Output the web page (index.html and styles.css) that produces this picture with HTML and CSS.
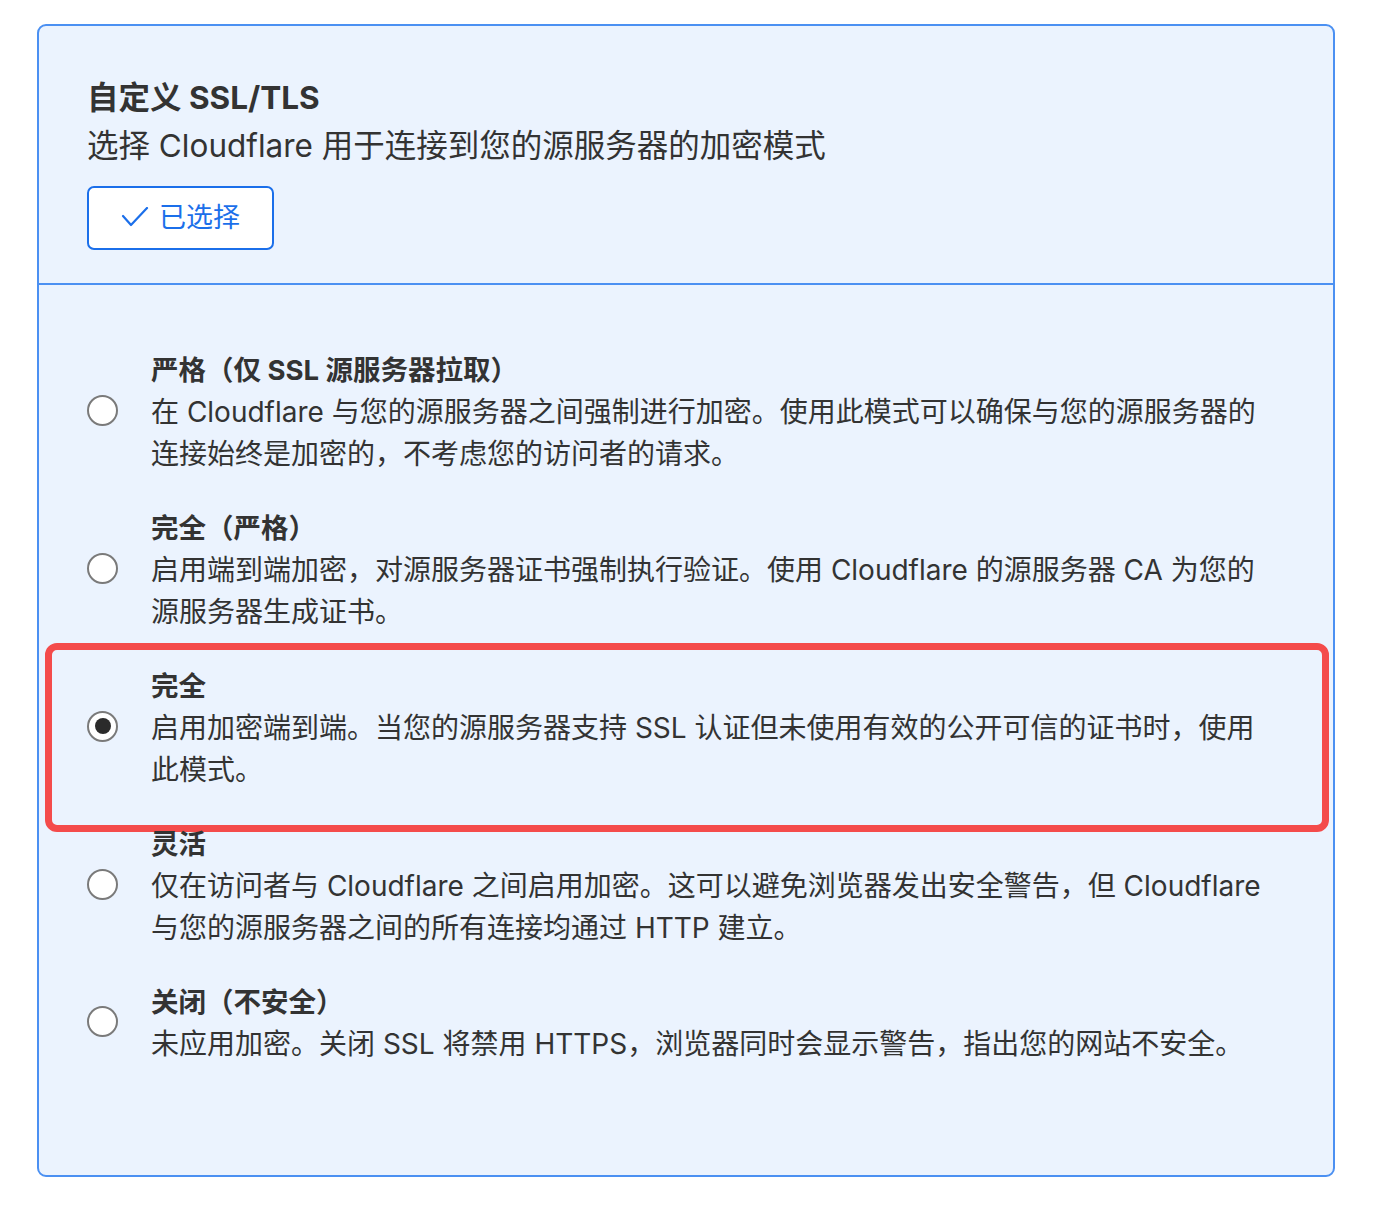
FILE: index.html
```html
<!DOCTYPE html>
<html lang="zh-CN">
<head>
<meta charset="utf-8">
<title>自定义 SSL/TLS</title>
<link rel="stylesheet" href="styles.css">
</head>
<body>
<div class="page">
  <section class="card">
    <header class="card-head">
      <h2 class="title">自定义 SSL/TLS</h2>
      <p class="subtitle">选择 Cloudflare 用于连接到您的源服务器的加密模式</p>
      <button class="btn-selected" type="button">
        <svg class="check" width="28" height="22" viewBox="0 0 28 22" aria-hidden="true"><polyline points="2,9 10,18 26,1" fill="none" stroke="currentColor" stroke-width="2.2" stroke-linecap="round" stroke-linejoin="round"/></svg>
        <span>已选择</span>
      </button>
    </header>
    <div class="card-body">
      <div class="option">
        <span class="radio"></span>
        <div class="opt-text">
          <div class="opt-title">严格（仅 SSL 源服务器拉取）</div>
          <div class="opt-desc">在 Cloudflare 与您的源服务器之间强制进行加密。使用此模式可以确保与您的源服务器的连接始终是加密的，不考虑您的访问者的请求。</div>
        </div>
      </div>
      <div class="option">
        <span class="radio"></span>
        <div class="opt-text">
          <div class="opt-title">完全（严格）</div>
          <div class="opt-desc">启用端到端加密，对源服务器证书强制执行验证。使用 Cloudflare 的源服务器 CA 为您的源服务器生成证书。</div>
        </div>
      </div>
      <div class="option highlighted">
        <span class="radio checked"></span>
        <div class="opt-text">
          <div class="opt-title">完全</div>
          <div class="opt-desc">启用加密端到端。当您的源服务器支持 SSL 认证但未使用有效的公开可信的证书时，使用此模式。</div>
        </div>
        <span class="annot"></span>
      </div>
      <div class="option">
        <span class="radio"></span>
        <div class="opt-text">
          <div class="opt-title">灵活</div>
          <div class="opt-desc">仅在访问者与 Cloudflare 之间启用加密。这可以避免浏览器发出安全警告，但 Cloudflare 与您的源服务器之间的所有连接均通过 HTTP 建立。</div>
        </div>
      </div>
      <div class="option">
        <span class="radio"></span>
        <div class="opt-text">
          <div class="opt-title">关闭（不安全）</div>
          <div class="opt-desc">未应用加密。关闭 SSL 将禁用 HTTPS，浏览器同时会显示警告，指出您的网站不安全。</div>
        </div>
      </div>
    </div>
  </section>
</div>
</body>
</html>
```

FILE: styles.css
```css
* { box-sizing: border-box; }
html, body { margin: 0; padding: 0; background: #ffffff; }
body {
  font-family: Inter, "Noto Sans CJK SC", "Noto Sans", sans-serif;
  color: #333333;
}
.page {
  padding: 24px 41px 0 37px;
}
.card {
  width: 1298px;
  background: #ebf3fe;
  border: 2px solid #4b90f2;
  border-radius: 9px;
}
.card-head {
  padding: 48px 48px 33px 48px;
  border-bottom: 2px solid #4b90f2;
}
.title {
  margin: 0;
  font-size: 31.5px;
  line-height: 48px;
  font-weight: 700;
  color: #333333;
}
.subtitle {
  margin: 0;
  font-size: 31.5px;
  line-height: 48px;
  font-weight: 400;
  color: #333333;
}
.btn-selected {
  margin-top: 16px;
  height: 64px;
  width: 187px;
  display: flex;
  align-items: center;
  justify-content: center;
  gap: 10px;
  padding: 0 0 2px 0;
  background: #ffffff;
  border: 2px solid #1b6fea;
  border-radius: 7px;
  color: #1b6fea;
  font-family: inherit;
  font-size: 27px;
  line-height: 1;
}
.check { display: block; margin-top: 2px; }
.card-body {
  padding: 64px 48px 110px 48px;
  display: flex;
  flex-direction: column;
  gap: 32px;
}
.option {
  position: relative;
  display: flex;
  align-items: center;
  gap: 33px;
}
.radio {
  flex: 0 0 31px;
  width: 31px;
  height: 31px;
  margin-top: -4px;
  border: 2px solid #7a7a7a;
  border-radius: 50%;
  background: #ffffff;
  display: flex;
  align-items: center;
  justify-content: center;
}
.radio.checked::after {
  content: "";
  width: 16px;
  height: 16px;
  border-radius: 50%;
  background: #2b2b2b;
}
.opt-text {
  width: 1116px;
}
.opt-title {
  font-size: 27.5px;
  line-height: 42px;
  font-weight: 700;
  color: #333333;
}
.opt-desc {
  font-size: 28px;
  line-height: 42px;
  color: #333333;
}
.annot {
  position: absolute;
  left: -42px;
  top: -22px;
  width: 1284px;
  height: 189px;
  border: 7px solid #f44b4b;
  border-radius: 12px;
  pointer-events: none;
}
```
